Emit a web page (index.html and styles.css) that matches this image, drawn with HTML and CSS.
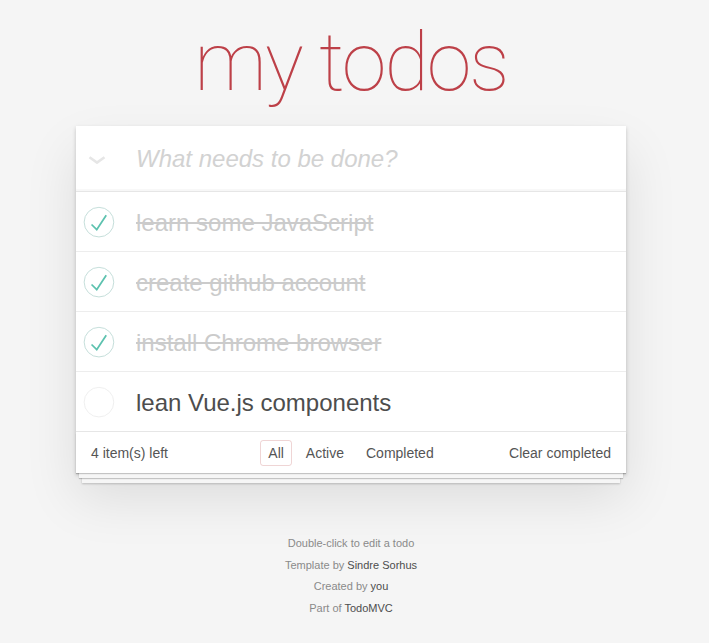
FILE: index.html
```html
<!DOCTYPE html>
<html lang="en">
<head>
<meta charset="utf-8">
<title>Todos</title>
<link rel="stylesheet" href="styles.css">
</head>
<body>
<div class="page">
  <h1 class="title">my todos</h1>
  <section class="todoapp">
    <header class="new-row">
      <span class="toggle-all">
        <svg width="18" height="8" viewBox="0 0 18 8"><polyline points="1.5,1.2 9,6.6 16.5,1.2" fill="none" stroke="#e6e6e6" stroke-width="2.6"/></svg>
      </span>
      <span class="placeholder">What needs to be done?</span>
    </header>
    <ul class="todo-list">
      <li class="todo done">
        <span class="toggle"><svg width="40" height="40" viewBox="-10 -18 100 135"><circle cx="50" cy="50" r="50" fill="none" stroke="#bddad5" stroke-width="3"/><path fill="#5dc2af" d="M72 25L42 71 27 56l-4 4 20 20 34-52z"/></svg></span>
        <span class="label">learn some JavaScript</span>
      </li>
      <li class="todo done">
        <span class="toggle"><svg width="40" height="40" viewBox="-10 -18 100 135"><circle cx="50" cy="50" r="50" fill="none" stroke="#bddad5" stroke-width="3"/><path fill="#5dc2af" d="M72 25L42 71 27 56l-4 4 20 20 34-52z"/></svg></span>
        <span class="label">create github account</span>
      </li>
      <li class="todo done">
        <span class="toggle"><svg width="40" height="40" viewBox="-10 -18 100 135"><circle cx="50" cy="50" r="50" fill="none" stroke="#bddad5" stroke-width="3"/><path fill="#5dc2af" d="M72 25L42 71 27 56l-4 4 20 20 34-52z"/></svg></span>
        <span class="label">install Chrome browser</span>
      </li>
      <li class="todo">
        <span class="toggle"><svg width="40" height="40" viewBox="-10 -18 100 135"><circle cx="50" cy="50" r="50" fill="none" stroke="#ededed" stroke-width="3"/></svg></span>
        <span class="label">lean Vue.js components</span>
      </li>
    </ul>
    <footer class="footer">
      <span class="count">4 item(s) left</span>
      <ul class="filters">
        <li><a class="filter selected" href="#/all">All</a></li>
        <li><a class="filter" href="#/active">Active</a></li>
        <li><a class="filter" href="#/completed">Completed</a></li>
      </ul>
      <span class="clear">Clear completed</span>
    </footer>
  </section>
  <footer class="info">
    <p>Double-click to edit a todo</p>
    <p>Template by <a href="#">Sindre Sorhus</a></p>
    <p>Created by <a href="#">you</a></p>
    <p>Part of <a href="#">TodoMVC</a></p>
  </footer>
</div>
</body>
</html>
```
FILE: styles.css
```css
* { box-sizing: border-box; }
html, body { margin: 0; padding: 0; }
body {
  background: #f5f5f5;
  font-family: "Liberation Sans", Arial, sans-serif;
  color: #4d4d4d;
  padding-right: 7px;
}
.page {
  width: 550px;
  margin: 0 auto;
  padding-top: 20px;
}
.title {
  margin: 0 0 21px;
  font-family: Roboto, "Liberation Sans", sans-serif;
  font-weight: 100;
  font-size: 81px;
  letter-spacing: -2px;
  line-height: 85px;
  height: 85px;
  text-align: center;
  color: #bd4048;
}
.todoapp {
  background: #fff;
  box-shadow: 0 2px 4px 0 rgba(0,0,0,0.2), 0 25px 50px 0 rgba(0,0,0,0.1);
}
.new-row {
  display: flex;
  align-items: center;
  box-shadow: inset 0 -2px 1px rgba(0,0,0,0.03);
  border-bottom: 1px solid #e6e6e6;
  height: 66px;
}
.toggle-all {
  width: 60px;
  display: flex;
  justify-content: center;
  padding-right: 18px;
  padding-top: 2px;
}
.toggle-all svg { display: block; }
.placeholder {
  font-size: 24px;
  font-style: italic;
  color: #d2d2d2;
}
.todo-list {
  list-style: none;
  margin: 0;
  padding: 0;
}
.todo {
  height: 60px;
  display: flex;
  align-items: center;
  border-bottom: 1px solid #ededed;
}
.todo:last-child { border-bottom: none; height: 59px; }
.toggle {
  width: 60px;
  display: flex;
  align-items: center;
  padding-top: 1px;
}
.toggle svg { display: block; }
.label {
  font-size: 24px;
  color: #4d4d4d;
  padding-top: 2px;
}
.done .label {
  color: #cbcbcb;
  text-decoration: line-through;
}
.footer {
  position: relative;
  height: 42px;
  padding: 0 15px;
  border-top: 1px solid #e6e6e6;
  display: grid;
  grid-template-columns: 1fr auto 1fr;
  align-items: center;
  font-size: 14px;
  color: #555;
}
.footer::before {
  content: '';
  position: absolute;
  right: 0; bottom: 0; left: 0;
  height: 40px;
  box-shadow: 0 1px 1px rgba(0,0,0,0.2), 0 8px 0 -3px #f6f6f6, 0 9px 1px -3px rgba(0,0,0,0.2), 0 16px 0 -6px #f6f6f6, 0 17px 2px -6px rgba(0,0,0,0.2);
  pointer-events: none;
}
.count { justify-self: start; }
.clear { justify-self: end; }
.filters {
  list-style: none;
  margin: 0;
  padding: 0;
  display: flex;
  gap: 6px;
}
.filter {
  display: block;
  padding: 3px 7px;
  line-height: 18px;
  border: 1px solid transparent;
  border-radius: 3px;
  color: inherit;
  text-decoration: none;
}
.filter.selected { border-color: rgba(175,47,47,0.2); }
.info {
  margin-top: 65px;
  text-align: center;
  font-size: 11px;
  color: #8a8a8a;
}
.info p {
  margin: 0 0 10.7px;
  line-height: 11px;
}
.info a {
  color: #4d4d4d;
  text-decoration: none;
}
```
